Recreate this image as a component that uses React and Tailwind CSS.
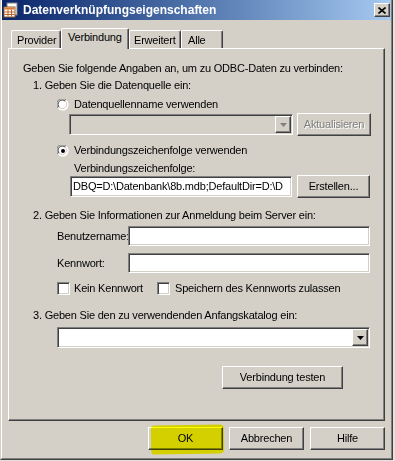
import React from "react";

const raised =
  "border border-t-white border-l-white border-r-[#404040] border-b-[#404040] shadow-[inset_-1px_-1px_0_#808080]";
const sunken =
  "border border-t-[#808080] border-l-[#808080] border-r-white border-b-white shadow-[inset_1px_1px_0_#404040,inset_-1px_-1px_0_#d4d0c8]";

function Button({ className = "", disabled, children }) {
  return (
    <div
      className={`${raised} flex items-center justify-center h-[23px] bg-[#d4d0c8] ${
        disabled ? "text-[#808080] [text-shadow:1px_1px_0_#fff]" : "text-black"
      } ${className}`}
    >
      {children}
    </div>
  );
}

function Radio({ checked }) {
  return (
    <svg width="12" height="12" viewBox="0 0 12 12" className="shrink-0">
      <circle cx="6" cy="6" r="5.5" fill="#fff" />
      <path d="M1.2 9.2 A5.5 5.5 0 0 1 9.2 1.2" fill="none" stroke="#808080" strokeWidth="1" />
      <path d="M9.2 1.2 A5.5 5.5 0 0 1 1.2 9.2" fill="none" stroke="#fff" strokeWidth="1" />
      <path d="M2.3 8.4 A4.3 4.3 0 0 1 8.4 2.3" fill="none" stroke="#404040" strokeWidth="1" />
      <path d="M8.4 2.3 A4.3 4.3 0 0 1 2.3 8.4" fill="none" stroke="#d4d0c8" strokeWidth="1" />
      {checked && <circle cx="6" cy="6" r="2" fill="#000" />}
    </svg>
  );
}

function Check() {
  return <div className={`${sunken} w-[13px] h-[13px] bg-white shrink-0`} />;
}

function Combo({ className = "", disabled }) {
  return (
    <div
      className={`${sunken} h-[21px] flex justify-end p-[1px] ${
        disabled ? "bg-[#d4d0c8]" : "bg-white"
      } ${className}`}
    >
      <div className={`${raised} w-[16px] h-full bg-[#d4d0c8] flex items-center justify-center`}>
        <svg width="7" height="4" viewBox="0 0 7 4">
          <path d="M0 0 H7 L3.5 4 Z" fill={disabled ? "#808080" : "#000"} />
        </svg>
      </div>
    </div>
  );
}

function TitleIcon() {
  return (
    <svg width="16" height="16" viewBox="0 0 16 16" className="shrink-0">
      <rect x="4" y="1" width="10" height="12" fill="#fff" stroke="#7f7f7f" />
      <rect x="1" y="5" width="11" height="10" fill="#fff" stroke="#8a5a2a" />
      <rect x="1.5" y="5.5" width="10" height="2" fill="#e07830" />
      <path d="M1.5 10 H11.5 M1.5 12.5 H11.5 M5 7.5 V14.5 M8.5 7.5 V14.5" stroke="#c06020" strokeWidth="1" />
    </svg>
  );
}

function Tab({ active, className = "", children }) {
  return (
    <div
      className={`border-t border-l border-r border-t-white border-l-white border-r-[#404040] shadow-[inset_-1px_0_0_#808080] rounded-tl-[2px] rounded-tr-[2px] bg-[#d4d0c8] flex items-center ${
        active ? "relative z-10 h-[21px] -mb-px pb-[3px]" : "h-[18px] pt-px"
      } ${className}`}
    >
      {children}
    </div>
  );
}

export default function App() {
  return (
    <div className="w-[395px] h-[461px] bg-[#e4e2dc] font-['Liberation_Sans',Arial,sans-serif] text-[11px] leading-[13px] tracking-[-0.2px] text-black">
      <div className="w-[393px] h-[460px] border-l border-r border-b border-l-[#d4d0c8] border-r-[#404040] border-b-[#404040] bg-[#d4d0c8]">
        <div className="h-full flex flex-col border-l border-r border-b border-l-white border-r-[#808080] border-b-[#808080]">
          {/* Title bar */}
          <div className="h-[20px] flex items-center bg-linear-to-r from-[#0a246a] to-[#a6caf0] pl-[1px] pr-[1px]">
            <TitleIcon />
            <span className="ml-[4px] text-white font-bold text-[12px] tracking-normal">
              Datenverknüpfungseigenschaften
            </span>
            <div className={`${raised} ml-auto w-[16px] h-[14px] bg-[#d4d0c8] flex items-center justify-center`}>
              <svg width="8" height="7" viewBox="0 0 8 7">
                <path d="M0.5 0.5 L7.5 6.5 M7.5 0.5 L0.5 6.5" stroke="#000" strokeWidth="1.6" />
              </svg>
            </div>
          </div>

          {/* Body */}
          <div className="pl-[6px] pt-[8px]">
            <div className="h-[20px] flex items-end ml-[3px]">
              <Tab className="w-[50px] pl-[5px]">Provider</Tab>
              <Tab active className="w-[68px] pl-[6px]">Verbindung</Tab>
              <Tab className="w-[52px] pl-[4px]">Erweitert</Tab>
              <Tab className="w-[42px] pl-[6px]">Alle</Tab>
            </div>

            <div className="w-[377px] h-[373px] border border-t-white border-l-white border-r-[#404040] border-b-[#404040] shadow-[inset_-1px_-1px_0_#808080] flex flex-col">
              <div className="mt-[13px] ml-[14px] h-[13px] whitespace-nowrap">
                Geben Sie folgende Angaben an, um zu ODBC-Daten zu verbinden:
              </div>
              <div className="mt-[4px] ml-[24px] h-[13px]">1. Geben Sie die Datenquelle ein:</div>
              <div className="mt-[6px] ml-[48px] h-[13px] flex items-center gap-[5px]">
                <Radio />
                <span>Datenquellenname verwenden</span>
              </div>
              <div className="mt-[2px] ml-[60px] h-[23px] flex items-center gap-[4px]">
                <Combo disabled className="w-[224px]" />
                <Button disabled className="w-[74px]">Aktualisieren</Button>
              </div>
              <div className="mt-[8px] ml-[48px] h-[13px] flex items-center gap-[5px]">
                <Radio checked />
                <span>Verbindungszeichenfolge verwenden</span>
              </div>
              <div className="mt-[5px] ml-[65px] h-[13px]">Verbindungszeichenfolge:</div>
              <div className="ml-[61px] h-[23px] flex items-center gap-[5px]">
                <div className={`${sunken} w-[222px] h-[21px] bg-white flex items-center pl-[2px] overflow-hidden whitespace-nowrap`}>
                  <span>{"DBQ=D:\\Datenbank\\8b.mdb;DefaultDir=D:\\D"}</span>
                </div>
                <Button className="w-[73px]">Erstellen...</Button>
              </div>

              <div className="mt-[11px] ml-[24px] h-[13px] whitespace-nowrap">
                2. Geben Sie Informationen zur Anmeldung beim Server ein:
              </div>
              <div className="mt-[4px] ml-[48px] h-[20px] flex items-center">
                <span className="w-[71px]">Benutzername:</span>
                <div className={`${sunken} w-[242px] h-[20px] bg-white`} />
              </div>
              <div className="mt-[7px] ml-[48px] h-[20px] flex items-center">
                <span className="w-[71px]">Kennwort:</span>
                <div className={`${sunken} w-[242px] h-[20px] bg-white`} />
              </div>
              <div className="mt-[9px] ml-[48px] h-[13px] flex items-center">
                <Check />
                <span className="ml-[4px] w-[83px]">Kein Kennwort</span>
                <Check />
                <span className="ml-[5px]">Speichern des Kennworts zulassen</span>
              </div>

              <div className="mt-[14px] ml-[24px] h-[13px] whitespace-nowrap">
                3. Geben Sie den zu verwendenden Anfangskatalog ein:
              </div>
              <div className="mt-[5px] ml-[48px]">
                <Combo className="w-[313px]" />
              </div>
              <div className="mt-[18px] ml-[213px]">
                <Button className="w-[121px]">Verbindung testen</Button>
              </div>
            </div>

            <div className="mt-[6px] w-[377px] flex justify-end gap-[6px]">
              <div className="relative">
                <Button className="w-[75px]">OK</Button>
                <div className="absolute left-[3px] top-[-2px] w-[73px] h-[29px] bg-[#ffff00] mix-blend-multiply rounded-[4px] rotate-[-1deg]" />
              </div>
              <Button className="w-[75px]">Abbrechen</Button>
              <Button className="w-[75px]">Hilfe</Button>
            </div>
          </div>
        </div>
      </div>
    </div>
  );
}
